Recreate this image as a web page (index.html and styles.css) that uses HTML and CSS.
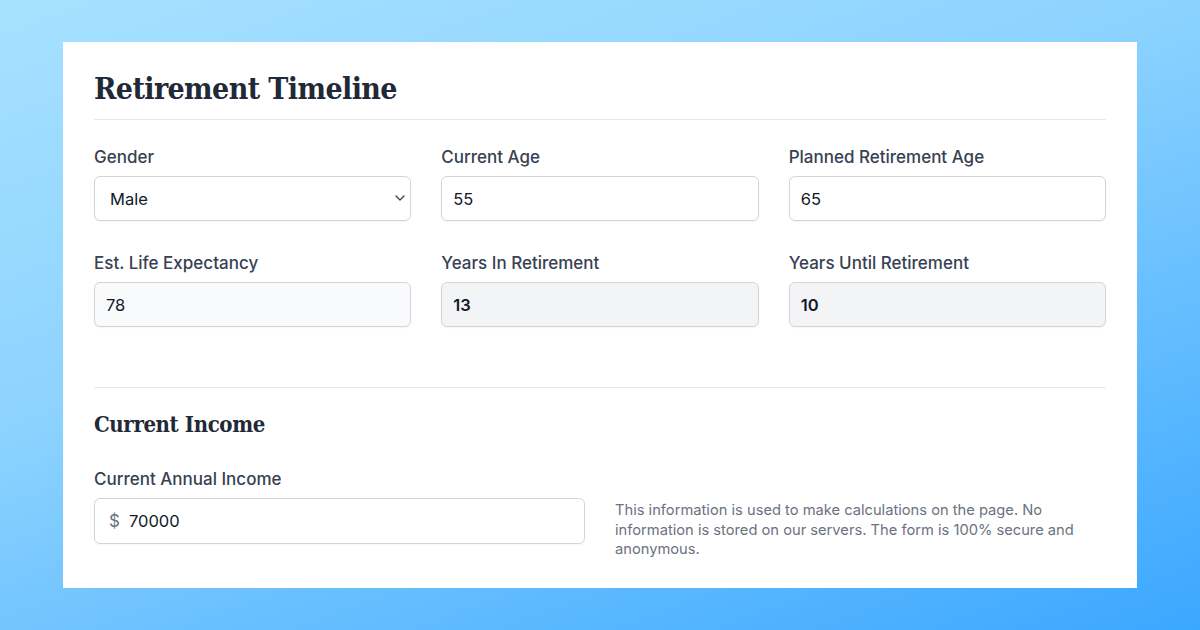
FILE: index.html
```html
<!DOCTYPE html>
<html lang="en">
<head>
<meta charset="utf-8">
<title>Retirement Timeline</title>
<link rel="stylesheet" href="styles.css">
</head>
<body>
<main class="card">
  <h1 class="title">Retirement Timeline</h1>
  <div class="grid3">
    <div class="field">
      <label class="label">Gender</label>
      <div class="select-wrap">
        <select class="control select">
          <option>Male</option>
          <option>Female</option>
        </select>
        <svg class="chevron" width="12" height="8" viewBox="0 0 12 8"><path d="M2 2 L6 6 L10 2" fill="none" stroke="#374151" stroke-width="1.3" stroke-linecap="round" stroke-linejoin="round"/></svg>
      </div>
    </div>
    <div class="field">
      <label class="label">Current Age</label>
      <input class="control" value="55">
    </div>
    <div class="field">
      <label class="label">Planned Retirement Age</label>
      <input class="control" value="65">
    </div>
    <div class="field">
      <label class="label">Est. Life Expectancy</label>
      <input class="control soft" value="78">
    </div>
    <div class="field">
      <label class="label">Years In Retirement</label>
      <input class="control readonly" value="13" readonly>
    </div>
    <div class="field">
      <label class="label">Years Until Retirement</label>
      <input class="control readonly" value="10" readonly>
    </div>
  </div>
  <hr class="divider">
  <h2 class="subtitle">Current Income</h2>
  <div class="grid2">
    <div class="field">
      <label class="label">Current Annual Income</label>
      <div class="money">
        <span class="currency">$</span>
        <input class="money-input" value="70000">
      </div>
    </div>
    <p class="note">This information is used to make calculations on the page. No information is stored on our servers. The form is 100% secure and anonymous.</p>
  </div>
</main>
</body>
</html>
```

FILE: styles.css
```css
html, body {
  margin: 0;
  padding: 0;
}
body {
  width: 1200px;
  height: 630px;
  overflow: hidden;
  background: linear-gradient(160deg, #a7e1ff 0%, #8dd3ff 40%, #3ba7ff 100%);
  font-family: Inter, "Noto Sans", sans-serif;
  color: #374151;
  padding-top: 42px;
  box-sizing: border-box;
}
.card {
  margin: 0 63px;
  height: 546px;
  background: #ffffff;
  box-sizing: border-box;
  padding: 28px 31px 0;
  overflow: hidden;
}
.title {
  margin: 0;
  font-family: "DejaVu Serif Condensed", "DejaVu Serif", serif;
  font-stretch: condensed;
  font-weight: 700;
  font-size: 30px;
  line-height: 38px;
  color: #1f2937;
  letter-spacing: -0.6px;
  padding-bottom: 11px;
  border-bottom: 1px solid #e5e7eb;
}
.grid3 {
  display: grid;
  grid-template-columns: repeat(3, 1fr);
  column-gap: 30px;
  row-gap: 30px;
  margin-top: 25px;
}
.field {
  display: flex;
  flex-direction: column;
  gap: 7px;
}
.label {
  font-size: 17px;
  font-weight: 500;
  line-height: 24px;
  color: #374151;
}
.control {
  height: 45px;
  box-sizing: border-box;
  border: 1px solid #d1d5db;
  border-radius: 6px;
  background: #ffffff;
  font-family: Inter, "Noto Sans", sans-serif;
  font-size: 16.5px;
  color: #111827;
  padding: 0 11px;
  width: 100%;
  outline: none;
  box-shadow: 0 1px 2px rgba(0,0,0,0.04);
}
.select-wrap {
  position: relative;
}
.select {
  appearance: none;
  -webkit-appearance: none;
  padding-left: 15px;
}
.chevron {
  position: absolute;
  right: 5px;
  top: 18px;
}
.soft {
  background: #f9fafb;
}
.readonly {
  background: #f3f4f6;
  font-weight: 600;
}
.divider {
  border: 0;
  border-top: 1px solid #e5e7eb;
  margin: 60px 0 0;
}
.subtitle {
  margin: 21px 0 0;
  font-family: "DejaVu Serif Condensed", "DejaVu Serif", serif;
  font-stretch: condensed;
  font-weight: 700;
  font-size: 22px;
  line-height: 30px;
  color: #1f2937;
  letter-spacing: -0.4px;
}
.grid2 {
  display: grid;
  grid-template-columns: 1fr 1fr;
  column-gap: 30px;
  margin-top: 28px;
}
.money {
  height: 46px;
  box-sizing: border-box;
  border: 1px solid #d1d5db;
  border-radius: 6px;
  display: flex;
  align-items: center;
  padding: 0 14px;
  gap: 9px;
  box-shadow: 0 1px 2px rgba(0,0,0,0.04);
}
.currency {
  font-size: 17px;
  color: #6b7280;
}
.money-input {
  border: 0;
  outline: none;
  flex: 1;
  font-family: Inter, "Noto Sans", sans-serif;
  font-size: 16.5px;
  color: #111827;
  padding: 0;
  background: transparent;
}
.note {
  margin: 34px 20px 0 0;
  font-size: 14.7px;
  line-height: 19.5px;
  color: #6b7280;
}
```
